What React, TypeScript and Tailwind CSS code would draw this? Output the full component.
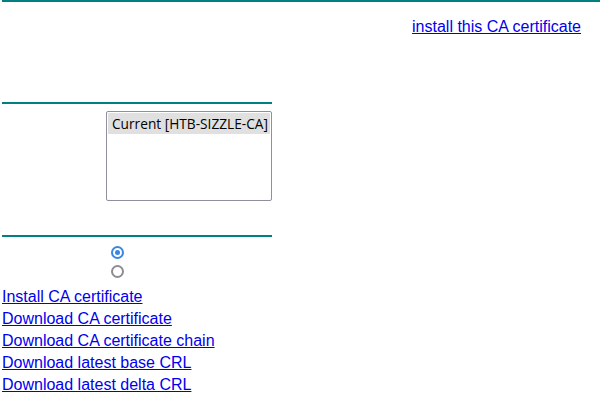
import React from 'react';

const links = [
  'Install CA certificate',
  'Download CA certificate',
  'Download CA certificate chain',
  'Download latest base CRL',
  'Download latest delta CRL',
];

const Rule: React.FC<{ wide?: boolean }> = ({ wide }) => (
  <div className={`ml-[2px] h-[2px] bg-[#008080] ${wide ? 'mr-[1px]' : 'w-[270px]'}`} />
);

const Radio: React.FC<{ checked?: boolean }> = ({ checked }) => (
  <span
    className={`flex items-center justify-center w-[13px] h-[13px] rounded-full border-2 ${
      checked ? 'border-[#3a86e4]' : 'border-[#8e8d96]'
    }`}
  >
    {checked && <span className="w-[5px] h-[5px] rounded-full bg-[#3a86e4]" />}
  </span>
);

export default function App() {
  return (
    <div className="bg-white w-[601px] h-[410px] overflow-hidden font-['Liberation_Sans',Arial,sans-serif] text-base text-black">
      <Rule wide />
      <div className="flex justify-end pr-[20px] mt-[16px] leading-[18px]">
        <a href="#" className="text-[#0000ee] underline">install this CA certificate</a>
      </div>

      <div className="mt-[66px]">
        <Rule />
      </div>
      <div className="flex mt-[7px]">
        <div className="w-[106px]" />
        <div className="w-[166px] h-[90px] border border-[#8f8f9d] rounded-[2px] p-px">
          <div className="bg-[#e0e0e0] h-[21px] pl-[4px] leading-[21px] text-[13.7px] font-['Open_Sans','Noto_Sans',sans-serif] whitespace-nowrap">
            Current [HTB-SIZZLE-CA]
          </div>
        </div>
      </div>

      <div className="mt-[34px]">
        <Rule />
      </div>
      <div className="flex flex-col pl-[111px] mt-[9px] gap-[6px]">
        <Radio checked />
        <Radio />
      </div>
      <div className="flex flex-col pl-[2px] mt-[8px]">
        {links.map((l) => (
          <div key={l} className="leading-[22px]">
            <a href="#" className="text-[#0000ee] underline">{l}</a>
          </div>
        ))}
      </div>
    </div>
  );
}
